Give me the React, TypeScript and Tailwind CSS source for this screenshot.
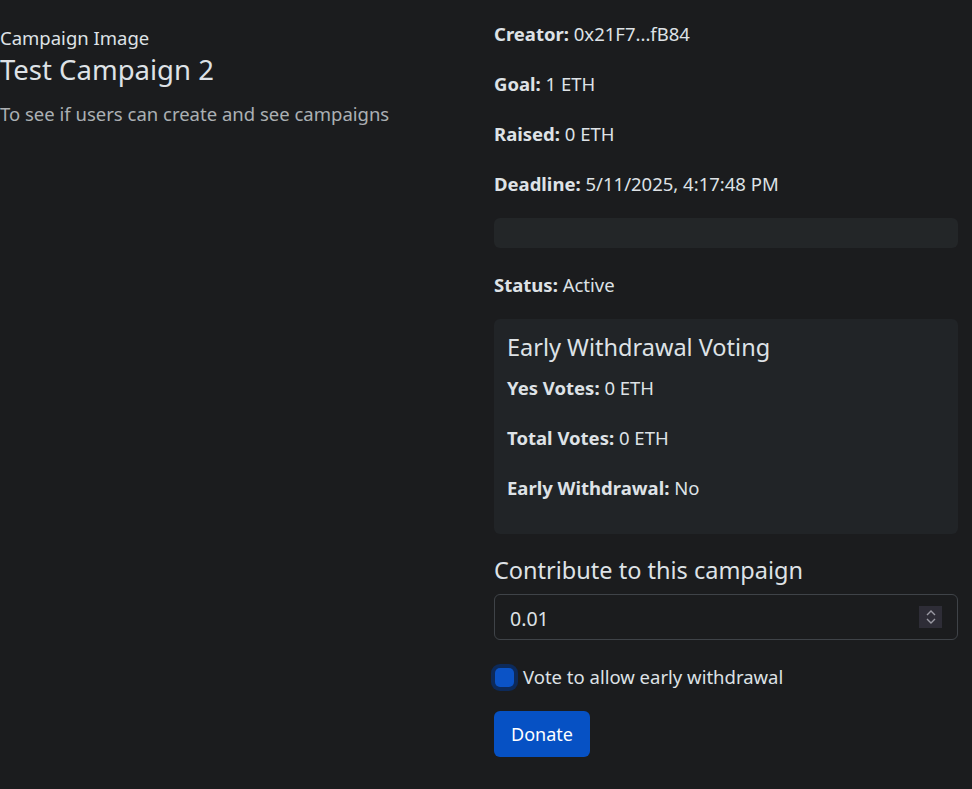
import React from "react";

function Row({ label, value, className = "" }: { label: string; value: string; className?: string }) {
  return (
    <p className={`h-[24px] leading-[24px] whitespace-nowrap ${className}`}>
      <span className="font-bold">{label}</span> {value}
    </p>
  );
}

export default function App() {
  return (
    <div
      className="min-h-[789px] w-full bg-[#1b1c1e] text-[#dee2e6] text-[18.5px]"
      style={{ fontFamily: '"Noto Sans", "Open Sans", sans-serif' }}
    >
      <div className="grid grid-cols-[494px_464px] pb-[31px]">
        {/* Left column */}
        <div className="pt-[26px]">
          <div className="leading-[24px]">Campaign Image</div>
          <h2 className="text-[27.5px] leading-[34px] mt-[3px]">Test Campaign 2</h2>
          <p className="mt-[15px] leading-[24px] text-[#dee2e6bf]">To see if users can create and see campaigns</p>
        </div>

        {/* Right column */}
        <div className="pt-[22px] flex flex-col">
          <Row label="Creator:" value="0x21F7...fB84" />
          <Row label="Goal:" value="1 ETH" className="mt-[26px]" />
          <Row label="Raised:" value="0 ETH" className="mt-[26px]" />
          <Row label="Deadline:" value="5/11/2025, 4:17:48 PM" className="mt-[26px]" />

          <div className="mt-[22px] h-[30px] rounded-[6px] bg-[#232628]" />

          <Row label="Status:" value="Active" className="mt-[25px]" />

          <div className="mt-[22px] rounded-[6px] bg-[#212427] px-[13px] pt-[14px] pb-[34px]">
            <h3 className="text-[23.5px] leading-[29px]">Early Withdrawal Voting</h3>
            <Row label="Yes Votes:" value="0 ETH" className="mt-[14px]" />
            <Row label="Total Votes:" value="0 ETH" className="mt-[26px]" />
            <Row label="Early Withdrawal:" value="No" className="mt-[26px]" />
          </div>

          <h3 className="mt-[22px] text-[23.5px] leading-[29px]">Contribute to this campaign</h3>

          <div className="mt-[9px] h-[46px] rounded-[6px] border border-[#3f4348] flex items-center pl-[15px] pr-[15px]">
            <span className="flex-1 text-[19.5px] leading-[24px] pt-[3px]">0.01</span>
            <div className="w-[23px] h-[22px] bg-[#2e2d37] flex flex-col items-center justify-center gap-[2px]">
              <svg width="10" height="6" viewBox="0 0 10 6">
                <path d="M1 5 L5 1 L9 5" stroke="#9a9aa3" strokeWidth="1.4" fill="none" />
              </svg>
              <svg width="10" height="6" viewBox="0 0 10 6">
                <path d="M1 1 L5 5 L9 1" stroke="#9a9aa3" strokeWidth="1.4" fill="none" />
              </svg>
            </div>
          </div>

          <label className="mt-[25px] flex items-center gap-[10px] h-[24px]">
            <span className="ml-[1px] w-[19px] h-[19px] rounded-[5px] bg-[#0b53c6] ring-[4px] ring-[#0d2a5a] block" />
            <span className="leading-[24px] ml-[-1px]">Vote to allow early withdrawal</span>
          </label>

          <div className="mt-[22px]">
            <button className="h-[46px] px-[17px] rounded-[6px] bg-[#0651c4] text-white text-[18px]">Donate</button>
          </div>
        </div>
      </div>
    </div>
  );
}
